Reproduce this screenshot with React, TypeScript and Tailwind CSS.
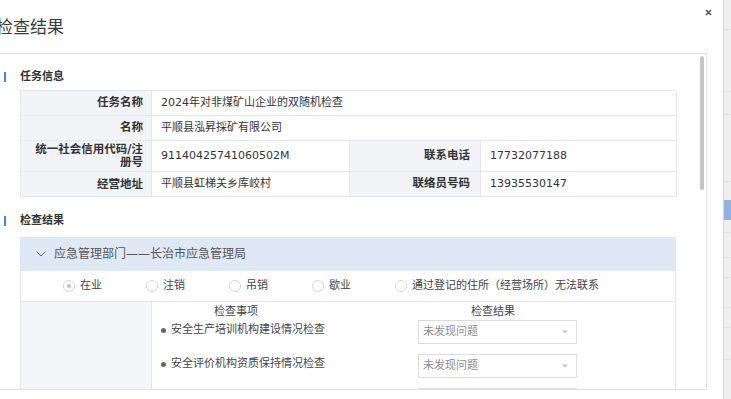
import React from 'react'

const TASK_ROWS = [
  { label: '任务名称', value: '2024年对非煤矿山企业的双随机检查' },
  { label: '名称', value: '平顺县泓昇採矿有限公司' },
]

const SPLIT_ROWS = [
  { label: '统一社会信用代码/注册号', value: '91140425741060502M', label2: '联系电话', value2: '17732077188', tall: true },
  { label: '经营地址', value: '平顺县虹梯关乡库峧村', label2: '联络员号码', value2: '13935530147', tall: false },
]

const STATUSES = ['在业', '注销', '吊销', '歇业', '通过登记的住所（经营场所）无法联系']

const ITEMS = ['安全生产培训机构建设情况检查', '安全评价机构资质保持情况检查']

function SectionTitle({ text }: { text: string }) {
  return (
    <div className="flex items-center h-[16px]">
      <div className="ml-[4px] w-[2px] h-[10px] bg-[#3b8ddf]" />
      <span className="ml-[14px] text-[11px] font-bold text-[#333] leading-[16px]">{text}</span>
    </div>
  )
}

function Radio({ label, checked }: { label: string; checked?: boolean }) {
  return (
    <div className="w-[83px] shrink-0 flex items-center gap-[5px] whitespace-nowrap">
      <span className="w-[12px] h-[12px] rounded-full border border-[#d6d6d6] bg-white flex items-center justify-center shrink-0">
        {checked && <span className="w-[4px] h-[4px] rounded-full bg-[#b8bfcc]" />}
      </span>
      <span className="text-[11px] text-[#444]">{label}</span>
    </div>
  )
}

function FakeSelect() {
  return (
    <div className="w-[159px] h-[24px] border border-[#dcdcdc] bg-white flex items-center justify-between pl-[4px] pr-[8px]">
      <span className="text-[11px] text-[#8a8a8a]">未发现问题</span>
      <svg width="6" height="4" viewBox="0 0 6 4">
        <path d="M0 0.5 L6 0.5 L3 3.5 Z" fill="#c4c4c4" />
      </svg>
    </div>
  )
}

export default function App() {
  return (
    <div className="w-[731px] h-[399px] overflow-hidden flex bg-white text-[#333] font-['DejaVu_Sans','Noto_Sans_CJK_SC',sans-serif]">
      {/* dialog */}
      <div className="relative w-[723px] shrink-0 bg-white">
        <div className="h-[53px] flex items-center -ml-[4px] pb-[1px] text-[17px] text-[#3a3a3a] font-['Noto_Sans_CJK_SC',sans-serif]">
          检查结果
        </div>
        <svg className="absolute left-[705px] top-[9px]" width="7" height="7" viewBox="0 0 7 7">
          <path d="M1 1 L6 6 M6 1 L1 6" stroke="#555" strokeWidth="1.6" />
        </svg>

        <div className="relative w-[707px] h-[337px] border border-l-0 border-[#e0e0e0] overflow-hidden">
          {/* scrollbar thumb */}
          <div className="absolute right-[2px] top-[2px] w-[4px] h-[134px] rounded-full bg-[#c6c6c6]" />

          <div className="pt-[15px]">
            <SectionTitle text="任务信息" />

            <div className="mt-[5px] ml-[20px] w-[656px] grid grid-cols-[131px_198px_131px_196px] border-t border-l border-[#e3e6ea]">
              {TASK_ROWS.map((r) => (
                <React.Fragment key={r.label}>
                  <div className="h-[25px] bg-[#f2f4f7] border-r border-b border-[#e3e6ea] flex items-center justify-end pr-[8px] text-[11.5px] font-bold">
                    {r.label}
                  </div>
                  <div className="col-span-3 h-[25px] border-r border-b border-[#e3e6ea] flex items-center pl-[9px] text-[11px]">
                    {r.value}
                  </div>
                </React.Fragment>
              ))}
              {SPLIT_ROWS.map((r) => (
                <React.Fragment key={r.label}>
                  <div
                    className={`${r.tall ? 'h-[31px]' : 'h-[25px]'} bg-[#f2f4f7] border-r border-b border-[#e3e6ea] flex items-center justify-end pl-[12px] pr-[8px] text-right text-[11.5px] leading-[13px] font-bold`}
                  >
                    {r.label}
                  </div>
                  <div className="border-r border-b border-[#e3e6ea] flex items-center pl-[9px] text-[11px]">{r.value}</div>
                  <div className="bg-[#f2f4f7] border-r border-b border-[#e3e6ea] flex items-center justify-end pr-[10px] text-[11.5px] font-bold">
                    {r.label2}
                  </div>
                  <div className="border-r border-b border-[#e3e6ea] flex items-center pl-[9px] text-[11px]">{r.value2}</div>
                </React.Fragment>
              ))}
            </div>

            <div className="mt-[16px]">
              <SectionTitle text="检查结果" />
            </div>

            {/* department accordion */}
            <div className="mt-[8px] ml-[20px] w-[656px] border-x border-[#e3e6ea]">
              <div className="h-[34px] bg-[#dfe9f5] flex items-center pl-[15px]">
                <svg width="10" height="6" viewBox="0 0 10 6">
                  <path d="M0.5 0.5 L5 5 L9.5 0.5" fill="none" stroke="#666" strokeWidth="1" />
                </svg>
                <span className="ml-[8px] text-[12px] text-[#555]">应急管理部门——长治市应急管理局</span>
              </div>

              <div className="h-[31px] border-b border-[#e6e6e6] flex items-center pl-[42px]">
                {STATUSES.map((s, i) => (
                  <Radio key={s} label={s} checked={i === 0} />
                ))}
              </div>

              <div className="flex h-[120px]">
                <div className="w-[131px] shrink-0 bg-[#f3f5f8] border-r border-[#e3e6ea]" />
                <div className="flex-1 pt-[2px] text-[11px] text-[#444]">
                  <div className="flex h-[15px] leading-[15px]">
                    <div className="w-[168px] text-center">检查事项</div>
                    <div className="w-[346px] text-center">检查结果</div>
                  </div>
                  <div className="mt-[1px] flex flex-col gap-[10px]">
                    {ITEMS.map((it) => (
                      <div key={it} className="flex items-start">
                        <div className="w-[266px] pl-[9px] pt-[3px] flex items-center gap-[5px] leading-[14px]">
                          <span className="w-[5px] h-[5px] rounded-full bg-[#666]" />
                          <span>{it}</span>
                        </div>
                        <FakeSelect />
                      </div>
                    ))}
                    <div className="flex items-start">
                      <div className="w-[266px]" />
                      <FakeSelect />
                    </div>
                  </div>
                </div>
              </div>
            </div>
          </div>
        </div>
      </div>

      {/* page behind the dialog */}
      <div className="flex-1 border-l border-[#d6d6d6] bg-[#efefef] flex flex-col">
        <div className="h-[30px] border-b border-[#e2e2e2]" />
        <div className="h-[62px] border-b border-[#e2e2e2]" />
        <div className="h-[23px] border-b border-[#e2e2e2]" />
        <div className="h-[67px] border-b border-[#e2e2e2]" />
        <div className="h-[18px]" />
        <div className="h-[20px] bg-[#90b2dc]" />
        <div className="h-[13px] border-b border-[#e2e2e2]" />
        <div className="h-[25px] border-b border-[#e2e2e2]" />
        <div className="h-[20px] border-b border-[#e2e2e2]" />
        <div className="h-[30px] border-b border-[#e2e2e2]" />
        <div className="h-[20px] border-b border-[#e2e2e2]" />
        <div className="h-[32px] border-b border-[#e2e2e2]" />
      </div>
    </div>
  )
}
